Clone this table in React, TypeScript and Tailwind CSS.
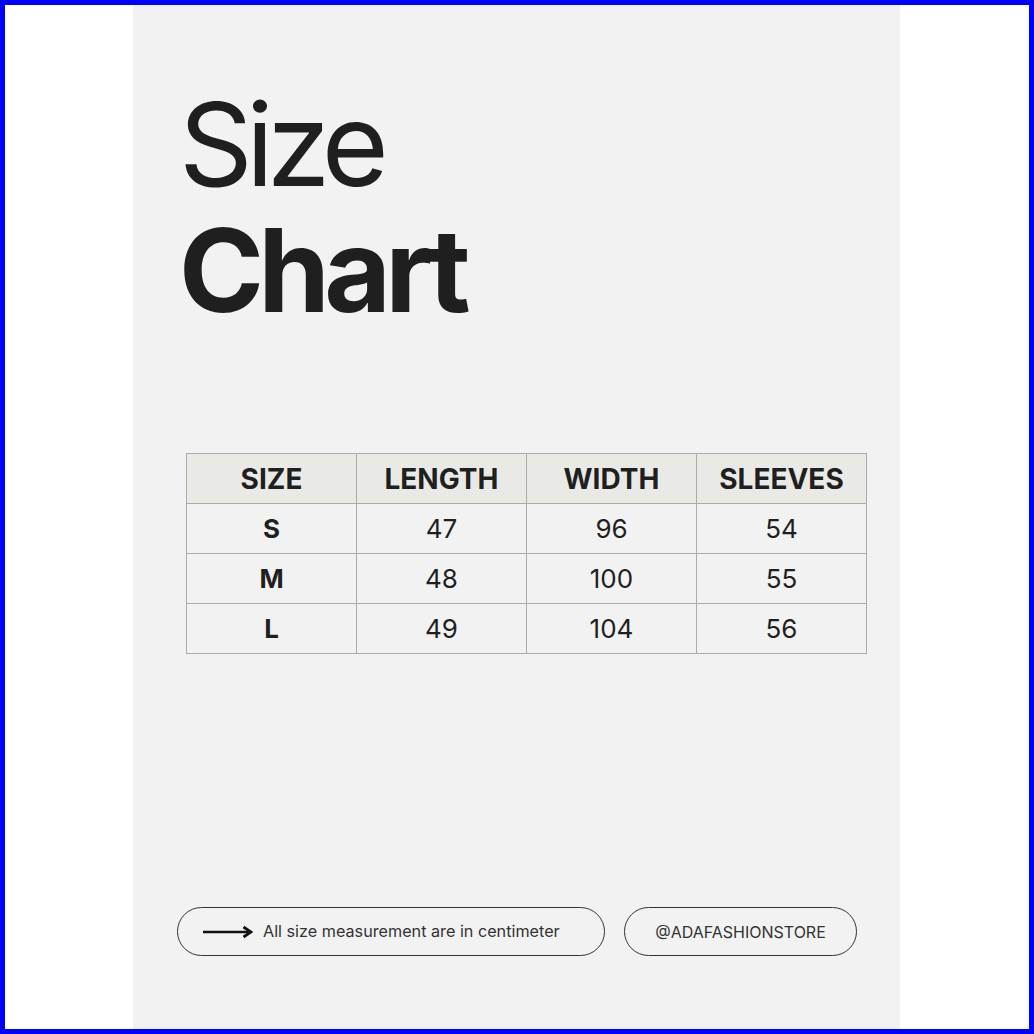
import React from 'react';

const rows = [
  { size: 'S', length: '47', width: '96', sleeves: '54' },
  { size: 'M', length: '48', width: '100', sleeves: '55' },
  { size: 'L', length: '49', width: '104', sleeves: '56' },
];

const headers = ['SIZE', 'LENGTH', 'WIDTH', 'SLEEVES'];

export default function App() {
  return (
    <div className="w-[1034px] h-[1034px] border-[5px] border-[#0000ff] bg-white" style={{ fontFamily: 'Inter, "Noto Sans", sans-serif' }}>
      <div className="ml-[128px] w-[767px] h-full bg-[#f2f2f2] flex flex-col text-[#1f1f1f]">
        {/* title */}
        <div className="pl-[46px] pt-[77px]">
          <h1 className="text-[115px] leading-[126px] font-normal tracking-[-0.06em]">Size</h1>
          <h1 className="text-[115px] leading-[126px] font-bold tracking-[-0.05em]">Chart</h1>
        </div>

        {/* table */}
        <table className="ml-[53px] mt-[119px] w-[681px] border-collapse table-fixed">
          <thead>
            <tr className="bg-[#e9e9e6]">
              {headers.map((h) => (
                <th key={h} className="h-[50px] border border-[#ababab] text-[28px] font-bold text-center p-0">
                  {h}
                </th>
              ))}
            </tr>
          </thead>
          <tbody>
            {rows.map((r) => (
              <tr key={r.size}>
                <td className="h-[50px] border border-[#ababab] text-[26px] font-bold text-center p-0">{r.size}</td>
                <td className="h-[50px] border border-[#ababab] text-[26px] text-center p-0">{r.length}</td>
                <td className="h-[50px] border border-[#ababab] text-[26px] text-center p-0">{r.width}</td>
                <td className="h-[50px] border border-[#ababab] text-[26px] text-center p-0">{r.sleeves}</td>
              </tr>
            ))}
          </tbody>
        </table>

        {/* footer pills */}
        <div className="mt-auto mb-[73px] ml-[44px] flex gap-[19px]">
          <div className="w-[428px] h-[49px] rounded-full border-[1.5px] border-[#333] flex items-center pl-[24px] gap-[10px]">
            <svg width="51" height="14" viewBox="0 0 51 14">
              <line x1="1" y1="7" x2="46" y2="7" stroke="#111" strokeWidth="2.6" />
              <path d="M41.5 2 L49 7 L41.5 12" fill="none" stroke="#111" strokeWidth="2.8" strokeLinejoin="miter" />
            </svg>
            <span className="text-[16.2px] text-[#333]">All size measurement are in centimeter</span>
          </div>
          <div className="w-[233px] h-[49px] rounded-full border-[1.5px] border-[#333] flex items-center justify-center">
            <span className="text-[16px] text-[#333]">@ADAFASHIONSTORE</span>
          </div>
        </div>
      </div>
    </div>
  );
}
